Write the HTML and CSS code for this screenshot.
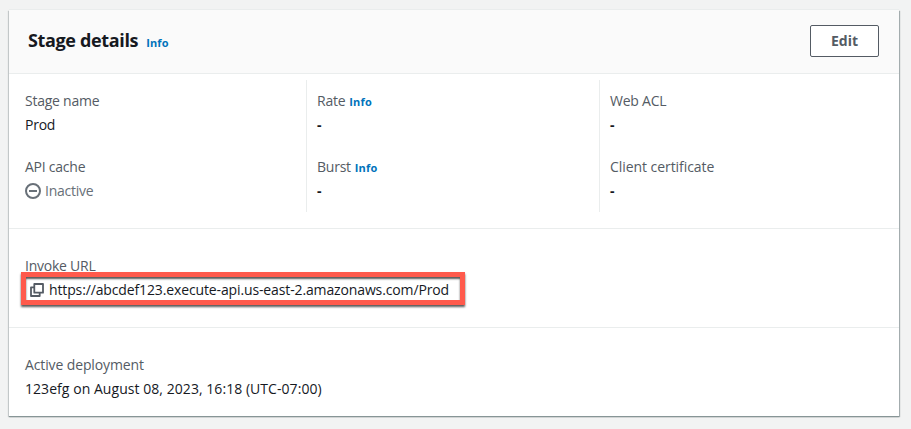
FILE: index.html
```html
<!DOCTYPE html>
<html lang="en">
<head>
<meta charset="utf-8">
<title>Stage details</title>
<link rel="stylesheet" href="styles.css">
</head>
<body>
<main class="card">
  <header class="card-header">
    <h2>Stage details</h2>
    <a class="info">Info</a>
    <button class="edit" type="button">Edit</button>
  </header>
  <section class="columns">
    <div class="column">
      <div class="field"><div class="label">Stage name</div><div class="value">Prod</div></div>
      <div class="field"><div class="label">API cache</div>
        <div class="value status"><svg width="16" height="16" viewBox="0 0 16 16" fill="none" stroke="currentColor" stroke-width="2"><circle cx="8" cy="8" r="7"/><path d="M4 8h8"/></svg><span>Inactive</span></div></div>
    </div>
    <div class="column">
      <div class="field"><div class="label">Rate<a class="info">Info</a></div><div class="value empty">-</div></div>
      <div class="field"><div class="label">Burst<a class="info">Info</a></div><div class="value empty">-</div></div>
    </div>
    <div class="column">
      <div class="field"><div class="label">Web ACL</div><div class="value empty">-</div></div>
      <div class="field"><div class="label certificate">Client certificate</div><div class="value empty">-</div></div>
    </div>
  </section>
  <section class="row">
    <div class="label">Invoke URL</div>
    <div class="value url"><svg width="14" height="14" viewBox="0 0 14 14" fill="none" stroke="#545b64" stroke-width="1.8" stroke-linejoin="round"><path d="M4.3 1h8.7v8.7H4.3z"/><path d="M4 4.3H1V13h8.7v-3"/></svg><span>https://abcdef123.execute-api.us-east-2.amazonaws.com/Prod</span><div class="highlight"></div></div>
  </section>
  <section class="row">
    <div class="label deployment">Active deployment</div>
    <div class="value date">123efg on August 08, 2023, 16:18 (UTC-07:00)</div>
  </section>
</main>
</body>
</html>
```
FILE: styles.css
```css
* { box-sizing: border-box; }
body {
  margin: 0;
  padding: 10px 12px 13px 9px;
  height: 429px;
  background: #f2f3f3;
  color: #16191f;
  font: 500 14px/22px "Open Sans", "Noto Sans", sans-serif;
  letter-spacing: -0.24px;
  overflow: hidden;
}
.card {
  height: 406px;
  background: #fff;
  box-shadow: 0 1px 1px #879596, 1px 1px 1px rgba(0, 28, 36, .3), -1px 1px 1px rgba(0, 28, 36, .15), 0 -1px 0 #eaeded;
}
.card-header {
  display: flex;
  align-items: center;
  height: 64px;
  padding: 0 20px 2px 19px;
  background: #fafafa;
  border-bottom: 1px solid #eaeded;
}
h2 { margin: -1px 8px 0 0; font-size: 18px; font-weight: 700; letter-spacing: -0.35px; }
.info { color: #0073bb; font-size: 11px; line-height: 14px; font-weight: 700; letter-spacing: 0.15px; }
.card-header .info { padding-top: 4px; }
.edit {
  width: 69px;
  height: 32px;
  margin-left: auto;
  padding: 0;
  border: 1px solid #545b64;
  border-radius: 2px;
  background: #fff;
  color: #545b64;
  font: 700 14px/22px "Open Sans", sans-serif;
}
.columns {
  display: grid;
  grid-template-columns: 297px 293px 300px;
  grid-template-rows: 132px;
  height: 155px;
  padding: 6px 0 17px;
  border-bottom: 1px solid #eaeded;
}
.column { padding: 10px 0 0 16px; }
.column + .column { border-left: 1px solid #eaeded; padding-left: 10px; }
.field { height: 66px; }
.field:last-child { height: 56px; }
.label { display: flex; align-items: baseline; gap: 4px; color: #545b64; margin-bottom: 2px; }
.value { height: 22px; }
.empty { font-weight: 700; }
.certificate { letter-spacing: -0.06px; }
.deployment { letter-spacing: -0.12px; }
.date { letter-spacing: 0.05px; }
.status { display: flex; align-items: center; gap: 4px; color: #687078; }
.row { height: 99px; padding: 26px 16px 0; border-bottom: 1px solid #eaeded; }
.row:last-child { border: 0; }
.url { position: relative; display: flex; align-items: center; gap: 5px; padding-left: 5px; letter-spacing: -0.13px; }
.highlight {
  position: absolute;
  left: -4px;
  top: -7px;
  width: 444px;
  height: 33px;
  border: 5px solid #ff5a4c;
  box-shadow: 0 2px 2px rgba(0, 0, 0, .65), inset 0 2px 2px rgba(0, 0, 0, .65);
}
```
